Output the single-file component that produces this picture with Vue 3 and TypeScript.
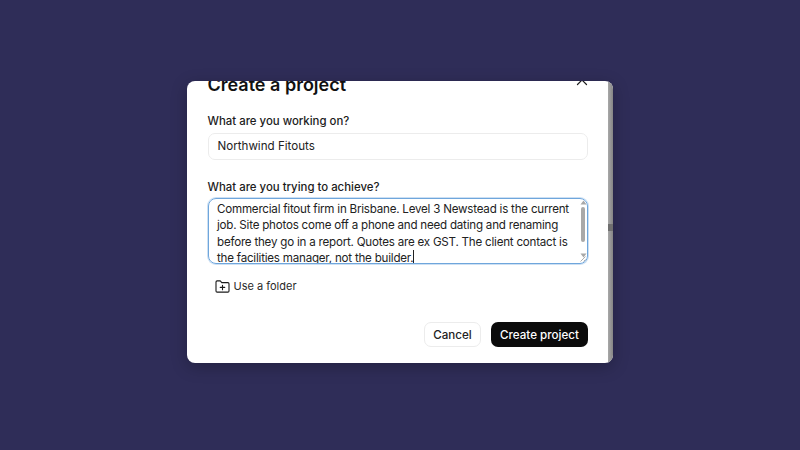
<script setup lang="ts">
const note = "Commercial fitout firm in Brisbane. Level 3 Newstead is the current job. Site photos come off a phone and need dating and renaming before they go in a report. Quotes are ex GST. The client contact is the facilities manager, not the builder.";
</script>

<template>
  <main class="backdrop">
    <section class="dialog">
      <div class="content">
        <header class="head">
          <h1>Create a project</h1>
          <button class="close" aria-label="Close">
            <svg width="12" height="12" viewBox="0 0 12 12" fill="none" stroke="#1f1f1f" stroke-width="1.2" stroke-linecap="round"><path d="M1.5 1.5 10.5 10.5M10.5 1.5 1.5 10.5" /></svg>
          </button>
        </header>
        <label class="label first">What are you working on?</label>
        <div class="input">Northwind Fitouts</div>
        <label class="label second">What are you trying to achieve?</label>
        <div class="area">
          <div class="text">{{ note }}<span class="caret"></span></div>
          <div class="bar">
            <svg class="arrow" width="7" height="5" viewBox="0 0 7 5"><path d="M3.5 0.5 6.5 4.5H0.5Z" fill="#a8a8a8" /></svg>
            <div class="thumb"></div>
            <svg class="arrow" width="7" height="5" viewBox="0 0 7 5"><path d="M3.5 4.5 6.5 0.5H0.5Z" fill="#a8a8a8" /></svg>
          </div>
          <svg class="grip" width="6" height="6" viewBox="0 0 6 6" fill="none" stroke="#9a9a9a" stroke-width="0.8"><path d="M5.5 0.5 0.5 5.5M5.5 3.5 3.5 5.5" /></svg>
        </div>
        <button class="folder">
          <svg width="15" height="13" viewBox="0 0 16 14" fill="none" stroke="#1a1a1a" stroke-width="1.2" stroke-linejoin="round" stroke-linecap="round"><path d="M1 2.2C1 1.5 1.5 1 2.2 1H5.6L7.2 2.8H13.8C14.5 2.8 15 3.3 15 4V11.8C15 12.5 14.5 13 13.8 13H2.2C1.5 13 1 12.5 1 11.8Z" /><path d="M8 5.6V10.4M5.6 8H10.4" /></svg>
          <span>Use a folder</span>
        </button>
        <footer class="actions">
          <button class="cancel">Cancel</button>
          <button class="create">Create project</button>
        </footer>
      </div>
      <div class="track"><div class="mark"></div></div>
    </section>
  </main>
</template>

<style>
html, body { margin: 0; }
</style>

<style scoped>
.backdrop {
  width: 800px;
  height: 450px;
  background: #2f2d58;
  display: flex;
  align-items: flex-start;
  justify-content: center;
  padding-top: 81px;
  box-sizing: border-box;
  font-family: Inter, "Noto Sans", sans-serif;
  color: #1c1c1c;
}
.dialog {
  width: 426px;
  height: 282px;
  background: #fff;
  border-radius: 8px;
  overflow: hidden;
  display: flex;
  box-shadow: 0 4px 16px rgba(0, 0, 0, 0.25);
}
.content {
  flex: 1;
  padding: 0 20px 0 20.5px;
  margin-top: -11px;
  min-width: 0;
}
.track {
  width: 5px;
  padding-top: 143px;
  box-sizing: border-box;
  background: linear-gradient(90deg, #a8a8a8, #858585);
}
.mark {
  height: 7px;
  background: #6f6f6f;
}
.head {
  display: flex;
  justify-content: space-between;
  align-items: center;
  height: 28px;
}
h1 {
  margin: 0;
  font-size: 18px;
  font-weight: 600;
  color: #111;
}
.close {
  border: 0;
  background: none;
  padding: 0;
  width: 12px;
  height: 12px;
  display: block;
  position: relative;
  top: -5px;
}
.label {
  display: block;
  font-size: 11.4px;
  font-weight: 500;
  line-height: 18px;
  color: #1c1c1c;
}
.first { margin-top: 14px; }
.second { margin-top: 18px; }
.input {
  margin-top: 3px;
  height: 25px;
  line-height: 25px;
  border: 1px solid #ececec;
  border-radius: 7px;
  padding: 0 9px;
  font-size: 11.6px;
  color: #222;
}
.area {
  position: relative;
  margin-top: 2px;
  height: 66px;
  box-sizing: border-box;
  border: 1px solid #6fa6dc;
  box-shadow: 0 0 0 1px rgba(111, 166, 220, 0.35);
  border-radius: 8px;
  overflow: hidden;
  padding: 2px 12.5px 0 8.5px;
}
.text {
  font-size: 11.6px;
  line-height: 16.3px;
  letter-spacing: -0.22px;
  color: #222;
}
.caret {
  display: inline-block;
  width: 1px;
  height: 14px;
  background: #222;
  vertical-align: -2px;
}
.bar {
  position: absolute;
  right: 0;
  top: 0;
  bottom: 0;
  width: 8px;
  display: flex;
  flex-direction: column;
  align-items: center;
  padding: 1px 0 5px;
  box-sizing: border-box;
}
.arrow { flex: none; }
.thumb {
  width: 4px;
  height: 35px;
  margin: 2px 0 auto;
  background: #a9a9a9;
  border-radius: 2px;
}
.grip {
  position: absolute;
  right: 1px;
  bottom: 1px;
}
.folder {
  display: flex;
  align-items: center;
  gap: 4px;
  margin: 11px 0 0 7px;
  border: 0;
  background: none;
  padding: 0;
  height: 22px;
  font-size: 11px;
  color: #2a2a2a;
}
.actions {
  display: flex;
  justify-content: flex-end;
  gap: 10px;
  margin-top: 25px;
}
button { font-family: inherit; cursor: pointer; }
.cancel, .create {
  height: 25px;
  border-radius: 7px;
  font-size: 11.6px;
  font-weight: 500;
  padding: 0;
}
.cancel {
  width: 57px;
  background: #fff;
  border: 1px solid #ececec;
  color: #222;
}
.create {
  width: 97px;
  background: #0b0b0b;
  border: 0;
  color: #fff;
}
</style>
